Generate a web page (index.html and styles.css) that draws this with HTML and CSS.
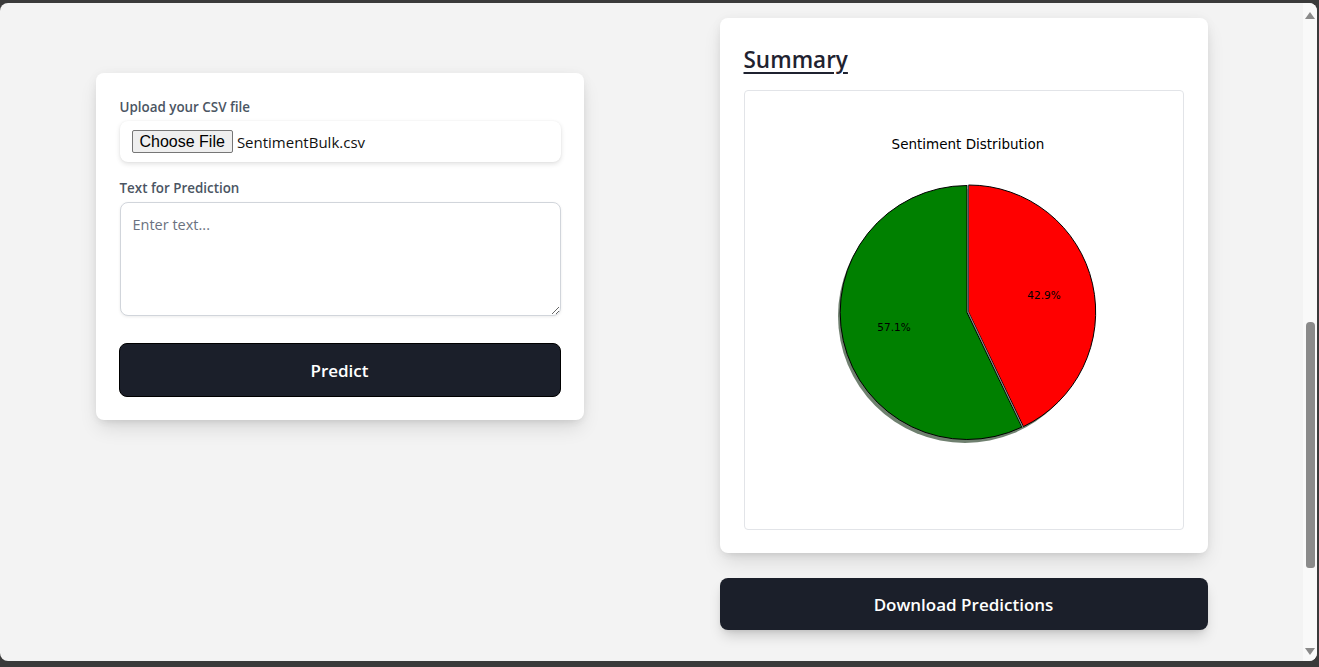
FILE: index.html
```html
<!DOCTYPE html>
<html lang="en">
<head>
<meta charset="utf-8">
<title>Sentiment Predictor</title>
<link rel="stylesheet" href="styles.css">
</head>
<body>
<div class="frame">
  <div class="viewport">
    <main class="page">
      <div class="grid">
        <section class="left-col">
          <form class="card form-card">
            <label class="label">Upload your CSV file</label>
            <div class="file-box">
              <button type="button" class="file-btn">Choose File</button>
              <span class="file-name">SentimentBulk.csv</span>
            </div>
            <label class="label label-gap" for="txt">Text for Prediction</label>
            <textarea id="txt" class="text-input" placeholder="Enter text..."></textarea>
            <button type="button" class="btn predict">Predict</button>
          </form>
        </section>
        <section class="right-col">
          <div class="card summary-card">
            <h2 class="summary-title">Summary</h2>
            <div class="chart-box">
              <svg class="chart" width="438" height="438" viewBox="0 0 438 438">
                <text x="223" y="58" class="chart-title" text-anchor="middle">Sentiment Distribution</text>
                <circle cx="220" cy="225" r="127" fill="#6f806f"/>
                <path d="M223.5 221 L223.5 94 A127 127 0 0 1 278.4 335.6 Z" fill="#ff0000" stroke="#000" stroke-width="1"/>
                <path d="M222 221.5 L276.9 336.1 A127 127 0 1 1 222 94.5 Z" fill="#008000" stroke="#000" stroke-width="1"/>
                <line x1="223" y1="94" x2="223" y2="221" stroke="#888" stroke-width="1"/>
                <line x1="223" y1="221" x2="277.6" y2="335.8" stroke="#888" stroke-width="1"/>
                <text x="299" y="208" class="pct" text-anchor="middle">42.9%</text>
                <text x="149" y="240" class="pct" text-anchor="middle">57.1%</text>
              </svg>
            </div>
          </div>
          <button type="button" class="btn download">Download Predictions</button>
        </section>
      </div>
    </main>
    <div class="scrollbar">
      <div class="arrow up"></div>
      <div class="track"><div class="thumb"></div></div>
      <div class="arrow down"></div>
    </div>
  </div>
</div>
</body>
</html>
```

FILE: styles.css
```css
* { box-sizing: border-box; }
html, body { margin: 0; padding: 0; }
body {
  width: 1319px;
  height: 667px;
  overflow: hidden;
  font-family: "Open Sans", "Noto Sans", sans-serif;
  background: #3a3a3a;
}
.frame {
  width: 1319px;
  height: 667px;
  padding: 3px 2px 6px 0;
  display: flex;
  background: #3a3a3a;
}
.viewport {
  flex: 1;
  display: flex;
  background: #f3f3f3;
  border-radius: 8px;
  overflow: hidden;
}
.page {
  flex: 1;
  padding-top: 15px;
}
.grid {
  width: 1112px;
  margin: 0 auto;
  display: grid;
  grid-template-columns: 488px 488px;
  column-gap: 136px;
  align-items: start;
}
.left-col { padding-top: 55px; }
.card {
  background: #fff;
  border-radius: 8px;
  box-shadow: 0 10px 20px -3px rgba(0,0,0,0.12), 0 4px 8px -4px rgba(0,0,0,0.1), 0 0 12px rgba(0,0,0,0.04);
}
.form-card {
  display: flex;
  flex-direction: column;
  padding: 24px 23px 23px 24px;
}
.label {
  font-size: 13.4px;
  font-weight: 600;
  color: #4b5563;
  line-height: 20px;
  margin-bottom: 4px;
}
.label-gap { margin-top: 16px; margin-bottom: 4px; }
.file-box {
  height: 41px;
  display: flex;
  align-items: center;
  padding: 0 12px;
  background: #fff;
  border-radius: 8px;
  box-shadow: 0 2px 5px rgba(0,0,0,0.12), 0 0 2px rgba(0,0,0,0.05);
}
.file-btn {
  font-family: "Liberation Sans", Arial, sans-serif;
  font-size: 16px;
  height: 23px;
  padding: 0 7px;
  background: #efefef;
  border: 1px solid #767676;
  border-radius: 2px;
  color: #000;
  line-height: 21px;
}
.file-name {
  margin-left: 4px;
  font-size: 15px;
  color: #111;
}
.text-input {
  width: 100%;
  height: 114px;
  border: 1px solid #d1d5db;
  border-radius: 8px;
  padding: 11px 12px;
  font-family: "Open Sans", "Noto Sans", sans-serif;
  font-size: 14.5px;
  line-height: 22px;
  box-shadow: 0 1px 3px rgba(0,0,0,0.08);
  resize: vertical;
  outline: none;
}
.text-input::placeholder { color: #6b7280; }
.btn {
  display: block;
  width: 100%;
  border: 1px solid #000;
  background: #1b1f2a;
  color: #fff;
  font-family: "Open Sans", "Noto Sans", sans-serif;
  font-weight: 600;
  font-size: 17px;
  border-radius: 8px;
  cursor: pointer;
}
.predict {
  margin-top: 27px;
  height: 54px;
  width: 442px;
  margin-left: -1px;
}
.summary-card {
  padding: 26px 24px 23px 24px;
}
.summary-title {
  margin: 0 0 14px 0;
  font-size: 22.5px;
  line-height: 32px;
  font-weight: 600;
  color: #1f2230;
  text-decoration: underline;
  text-underline-offset: 4px;
  text-decoration-thickness: 2px;
}
.chart-box {
  width: 440px;
  height: 440px;
  border: 1px solid #e2e4e8;
  border-radius: 4px;
  background: #fff;
}
.chart { display: block; }
.chart-title {
  font-family: "DejaVu Sans", sans-serif;
  font-size: 13.5px;
  fill: #000;
}
.pct {
  font-family: "DejaVu Sans", sans-serif;
  font-size: 10.5px;
  fill: #000;
}
.download {
  margin-top: 25px;
  height: 52px;
  border: none;
  box-shadow: 0 8px 14px -3px rgba(0,0,0,0.18), 0 3px 6px -3px rgba(0,0,0,0.12);
}
.scrollbar {
  width: 14px;
  background: #f9f9f9;
  display: flex;
  flex-direction: column;
  align-items: center;
}
.arrow {
  width: 0;
  height: 0;
  border-left: 5px solid transparent;
  border-right: 5px solid transparent;
}
.arrow.up {
  margin-top: 9px;
  border-bottom: 7px solid #8a8a8a;
}
.arrow.down {
  margin-bottom: 6px;
  border-top: 7px solid #8a8a8a;
}
.track {
  flex: 1;
  width: 100%;
  display: flex;
  justify-content: center;
}
.thumb {
  margin-top: 303px;
  width: 9px;
  height: 246px;
  background: #8a8a8a;
  border-radius: 4px 4px 3px 3px;
}
```
